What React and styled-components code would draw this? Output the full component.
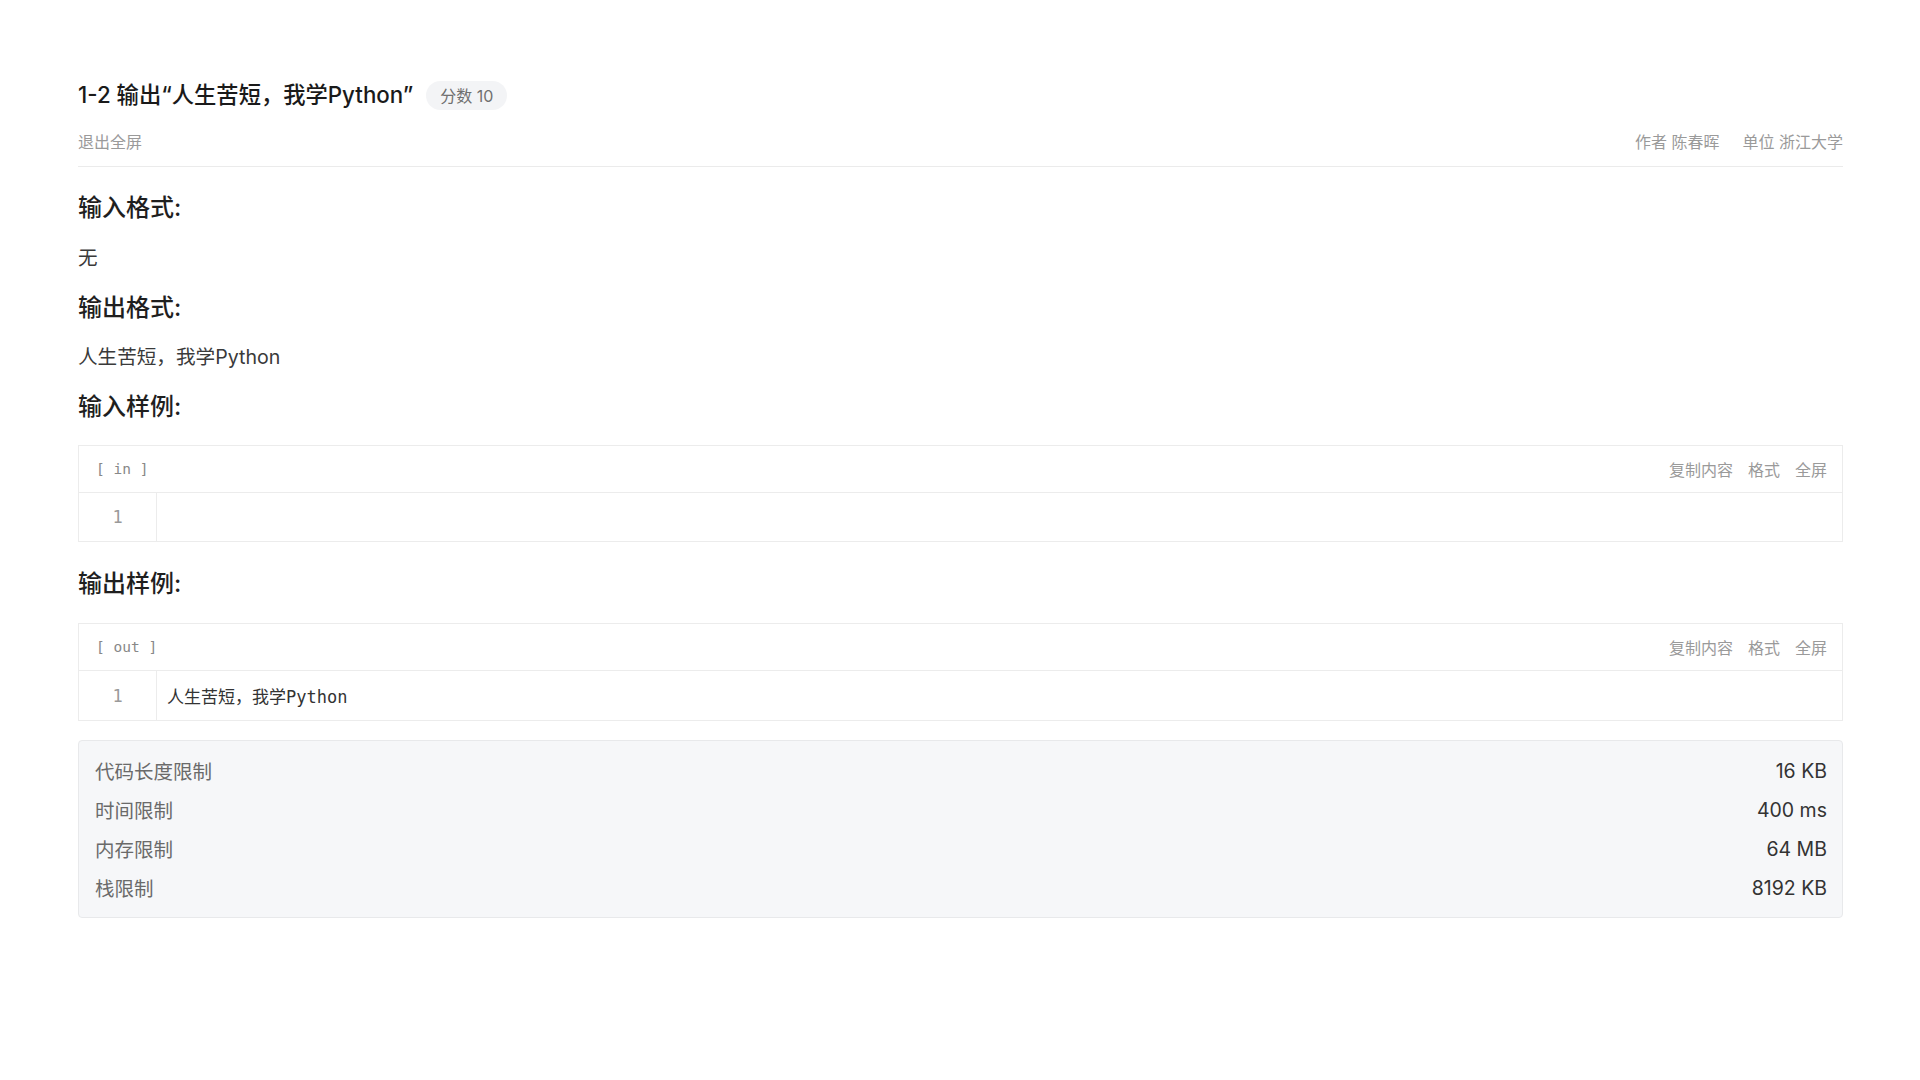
import React from "react";
import styled, { createGlobalStyle } from "styled-components";

const Global = createGlobalStyle`
  html, body { margin: 0; padding: 0; background: #ffffff; }
  body { font-family: "Inter", "Noto Sans CJK SC", sans-serif; color: #333; }
  * { box-sizing: border-box; }
`;

const Page = styled.div`
  padding: 80px 77px 0 78px;
  width: 1920px;
`;

const Header = styled.header`
  display: flex;
  flex-direction: column;
  border-bottom: 1px solid #ebebeb;
  padding-bottom: 13px;
`;

const TitleRow = styled.div`
  display: flex;
  align-items: center;
  gap: 13px;
  height: 30px;
`;

const Title = styled.h1`
  margin: 0;
  font-size: 22.3px;
  line-height: 30px;
  font-weight: 500;
  color: #1a1a1a;
`;

const Badge = styled.span`
  display: inline-flex;
  align-items: center;
  height: 29px;
  padding: 0 14px;
  border-radius: 15px;
  background: #f3f4f6;
  color: #707070;
  font-size: 16px;
`;

const MetaRow = styled.div`
  display: flex;
  justify-content: space-between;
  align-items: center;
  margin-top: 19px;
  height: 24px;
  font-size: 16px;
  color: #9a9a9a;
`;

const MetaGroup = styled.div`
  display: flex;
  gap: 23px;
`;

const Content = styled.main`
  display: flex;
  flex-direction: column;
`;

const Heading = styled.h2`
  margin: ${(p) => p.$mt}px 0 0;
  font-size: 24px;
  line-height: 32px;
  font-weight: 500;
  color: #1f1f1f;
`;

const Para = styled.p`
  margin: 18.5px 0 0;
  font-size: 19.6px;
  line-height: 30px;
  color: #3a3a3a;
`;

const CodeBox = styled.div`
  margin-top: ${(p) => p.$mt}px;
  border: 1px solid #ececec;
  display: flex;
  flex-direction: column;
`;

const CodeHeader = styled.div`
  display: flex;
  align-items: center;
  justify-content: space-between;
  height: 47px;
  padding: 0 15px 0 17px;
  border-bottom: 1px solid #ececec;
`;

const CodeLabel = styled.span`
  font-family: "DejaVu Sans Mono", "Noto Sans CJK SC", monospace;
  font-size: 14.5px;
  color: #888888;
`;

const Actions = styled.div`
  display: flex;
  gap: 15px;
  font-size: 16px;
  color: #9a9a9a;
`;

const CodeRow = styled.div`
  display: flex;
  height: ${(p) => p.$h}px;
`;

const LineNo = styled.div`
  width: 78px;
  flex: none;
  border-right: 1px solid #ececec;
  display: flex;
  align-items: center;
  justify-content: center;
  font-family: "DejaVu Sans Mono", monospace;
  font-size: 17px;
  color: #9a9a9a;
`;

const CodeLine = styled.div`
  flex: 1;
  display: flex;
  align-items: center;
  padding-left: 10px;
  font-family: "DejaVu Sans Mono", "Noto Sans CJK SC", monospace;
  font-size: 17px;
  color: #333;
`;

const Limits = styled.div`
  margin-top: 19px;
  padding: 10px 15px 10px 16px;
  background: #f6f7f9;
  border: 1px solid #e8e9eb;
  border-radius: 4px;
  display: flex;
  flex-direction: column;
`;

const LimitRow = styled.div`
  display: flex;
  justify-content: space-between;
  align-items: center;
  height: 39px;
  font-size: 19.5px;
`;

const LimitLabel = styled.span`
  color: #6a6a6a;
`;

const LimitValue = styled.span`
  color: #333;
`;

function Sample({ label, text, mt, h }) {
  return (
    <CodeBox $mt={mt}>
      <CodeHeader>
        <CodeLabel>{label}</CodeLabel>
        <Actions>
          <span>复制内容</span>
          <span>格式</span>
          <span>全屏</span>
        </Actions>
      </CodeHeader>
      <CodeRow $h={h}>
        <LineNo>1</LineNo>
        <CodeLine>{text}</CodeLine>
      </CodeRow>
    </CodeBox>
  );
}

const limits = [
  ["代码长度限制", "16 KB"],
  ["时间限制", "400 ms"],
  ["内存限制", "64 MB"],
  ["栈限制", "8192 KB"],
];

export default function App() {
  return (
    <>
      <Global />
      <Page>
        <Header>
          <TitleRow>
            <Title>1-2 输出“人生苦短，我学Python”</Title>
            <Badge>分数 10</Badge>
          </TitleRow>
          <MetaRow>
            <span>退出全屏</span>
            <MetaGroup>
              <span>作者 陈春晖</span>
              <span>单位 浙江大学</span>
            </MetaGroup>
          </MetaRow>
        </Header>
        <Content>
          <Heading $mt={25}>输入格式:</Heading>
          <Para>无</Para>
          <Heading $mt={19}>输出格式:</Heading>
          <Para>人生苦短，我学Python</Para>
          <Heading $mt={19}>输入样例:</Heading>
          <Sample label="[ in ]" text="" mt={22} h={48} />
          <Heading $mt={26}>输出样例:</Heading>
          <Sample label="[ out ]" text="人生苦短，我学Python" mt={23} h={49} />
          <Limits>
            {limits.map(([k, v]) => (
              <LimitRow key={k}>
                <LimitLabel>{k}</LimitLabel>
                <LimitValue>{v}</LimitValue>
              </LimitRow>
            ))}
          </Limits>
        </Content>
      </Page>
    </>
  );
}
